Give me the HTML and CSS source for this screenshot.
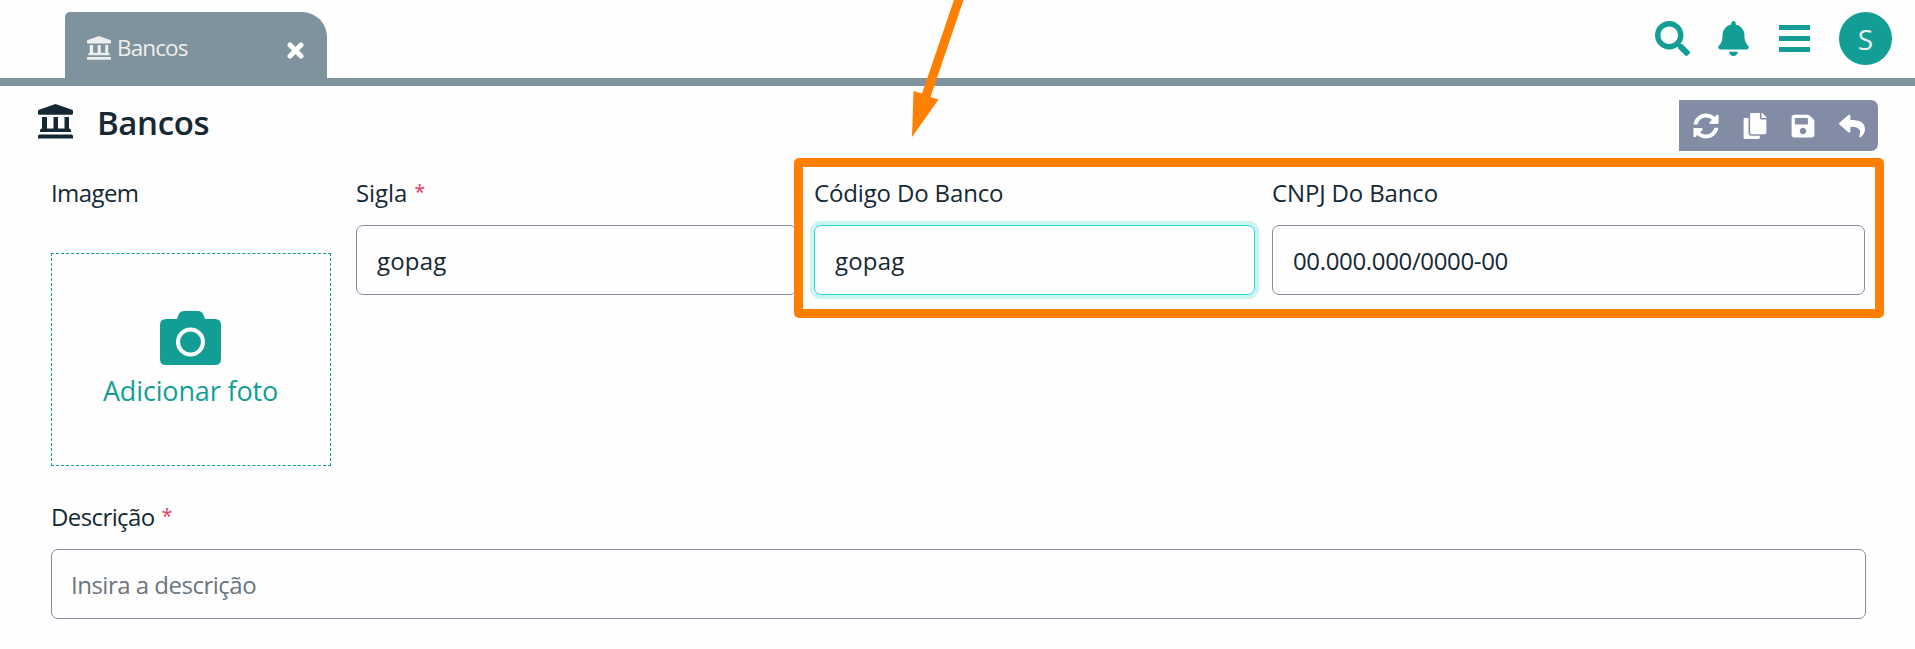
FILE: index.html
```html
<!DOCTYPE html>
<html lang="pt-BR">
<head>
<meta charset="utf-8">
<title>Bancos</title>
<link rel="stylesheet" href="styles.css">
</head>
<body>
<svg class="sprite" aria-hidden="true">
  <symbol id="bank" viewBox="0 0 35 35"><path d="M17.5 0 34 5.800Q35 6.200 35 7V9.500Q35 10.800 33.700 10.800H1.300Q0 10.800 0 9.500V7Q0 6.200 1 5.800ZM4 13H9V24.500H15.500V13H20V24.500H26.500V13H31V24.500Q33 24.500 33 26.500V28H2V26.500Q2 24.500 4 24.500ZM1.500 30.500H33.500Q35 30.500 35 32V34.500H0V32Q0 30.500 1.500 30.500Z"/></symbol>
</svg>
<header class="topbar">
  <div class="tab">
    <svg class="tab-icon"><use href="#bank"/></svg>
    <span class="tab-title">Bancos</span>
    <svg class="tab-close" viewBox="0 0 17 17"><path d="M3 3 14 14M14 3 3 14"/></svg>
  </div>
  <nav class="actions">
    <svg class="search" viewBox="0 0 512 512"><path d="M505 442.700 405.300 343c-4.500-4.500-10.600-7-17-7H372c27.600-35.300 44-79.700 44-128C416 93.100 322.900 0 208 0S0 93.100 0 208s93.100 208 208 208c48.300 0 92.700-16.400 128-44v16.300c0 6.400 2.500 12.500 7 17l99.700 99.700c9.400 9.400 24.600 9.400 33.900 0l28.300-28.300c9.400-9.400 9.400-24.600.1-34zM208 336c-70.700 0-128-57.200-128-128 0-70.700 57.200-128 128-128 70.700 0 128 57.200 128 128 0 70.700-57.200 128-128 128z"/></svg>
    <svg class="bell" viewBox="0 0 448 512"><path d="M224 512c35.320 0 63.970-28.650 63.970-64H160.030c0 35.350 28.650 64 63.970 64zm215.390-149.710c-19.320-20.760-55.470-51.990-55.470-154.290 0-77.700-54.480-139.900-127.940-155.160V32c0-17.670-14.320-32-31.980-32s-31.980 14.330-31.980 32v20.840C118.560 68.100 64.080 130.300 64.080 208c0 102.300-36.150 133.530-55.470 154.290-6 6.450-8.660 14.160-8.610 21.710.11 16.400 12.980 32 32.100 32h383.800c19.120 0 32-15.600 32.100-32 .05-7.550-2.610-15.270-8.610-21.710z"/></svg>
    <svg class="bars" viewBox="0 0 31 27"><path d="M0 0H31V5H0ZM0 11H31V16H0ZM0 22H31V27H0Z"/></svg>
    <span class="avatar">S</span>
  </nav>
</header>
<main>
  <div class="heading">
    <svg class="heading-icon"><use href="#bank"/></svg>
    <h1>Bancos</h1>
    <div class="toolbar">
      <svg viewBox="0 0 512 512"><path d="M370.720 133.280C339.458 104.008 298.888 87.962 255.848 88c-77.458.068-144.328 53.178-162.791 126.850-1.344 5.363-6.122 9.150-11.651 9.150H24.103c-7.498 0-13.194-6.807-11.807-14.176C33.933 94.924 134.813 8 256 8c66.448 0 126.791 26.136 171.315 68.685L463.030 40.970C478.149 25.851 504 36.559 504 57.941V192c0 13.255-10.745 24-24 24H345.941c-21.382 0-32.090-25.851-16.971-40.971l41.750-41.749zM32 296h134.059c21.382 0 32.090 25.851 16.971 40.971l-41.750 41.750c31.262 29.273 71.835 45.319 114.876 45.280 77.418-.070 144.315-53.144 162.787-126.849 1.344-5.363 6.122-9.150 11.651-9.150h57.304c7.498 0 13.194 6.807 11.807 14.176C478.067 417.076 377.187 504 256 504c-66.448 0-126.791-26.136-171.315-68.685L48.970 471.030C33.851 486.149 8 475.441 8 454.059V320c0-13.255 10.745-24 24-24z"/></svg>
      <svg viewBox="0 0 448 512"><path d="M320 448v40c0 13.255-10.745 24-24 24H24c-13.255 0-24-10.745-24-24V120c0-13.255 10.745-24 24-24h72v296c0 30.879 25.121 56 56 56h168zm0-344V0H152c-13.255 0-24 10.745-24 24v368c0 13.255 10.745 24 24 24h272c13.255 0 24-10.745 24-24V128H344c-13.200 0-24-10.800-24-24zm120.971-31.029L375.029 7.029A24 24 0 0 0 358.059 0H352v96h96v-6.059a24 24 0 0 0-7.029-16.970z"/></svg>
      <svg viewBox="0 0 448 512"><path d="M433.941 129.941l-83.882-83.882A48 48 0 0 0 316.118 32H48C21.490 32 0 53.490 0 80v352c0 26.510 21.490 48 48 48h352c26.510 0 48-21.490 48-48V163.882a48 48 0 0 0-14.059-33.941zM224 416c-35.346 0-64-28.654-64-64s28.654-64 64-64 64 28.654 64 64-28.654 64-64 64zm96-304.520V212c0 6.627-5.373 12-12 12H76c-6.627 0-12-5.373-12-12V108c0-6.627 5.373-12 12-12h228.520c3.183 0 6.235 1.264 8.485 3.515l3.480 3.480A11.996 11.996 0 0 1 320 111.480z"/></svg>
      <svg viewBox="0 0 512 512"><path d="M8.309 189.836L184.313 37.851C199.719 24.546 224 35.347 224 56.015v80.053c160.629 1.839 288 34.032 288 186.258 0 61.441-39.581 122.309-83.333 154.132-13.653 9.931-33.111-2.533-28.077-18.631 45.344-145.012-21.507-183.510-176.590-185.742V360c0 20.700-24.300 31.453-39.687 18.164l-176.004-152c-11.071-9.562-11.086-26.753 0-36.328z"/></svg>
    </div>
  </div>
  <form class="fields">
    <div class="field">
      <label class="l-imagem">Imagem</label>
      <div class="photo">
        <svg viewBox="0 0 61 54"><path fill-rule="evenodd" d="M6 8H17L18.500 4Q20 0 24 0H38Q42 0 43.500 4L45 8H55Q61 8 61 14V48Q61 54 55 54H6Q0 54 0 48V14Q0 8 6 8ZM30.500 16.500A14.500 14.500 0 1 0 30.500 45.500A14.500 14.500 0 1 0 30.500 16.500ZM30.500 20.500A10.500 10.500 0 1 1 30.500 41.500A10.500 10.500 0 1 1 30.500 20.500Z"/></svg>
        <span>Adicionar foto</span>
      </div>
    </div>
    <div class="field">
      <label><span class="l-sigla">Sigla</span><b class="req">*</b></label>
      <div class="input"><span class="v-gopag">gopag</span></div>
    </div>
    <div class="field">
      <label class="l-codigo">Código Do Banco</label>
      <div class="input focused"><span class="v-gopag">gopag</span></div>
    </div>
    <div class="field">
      <label class="l-cnpj">CNPJ Do Banco</label>
      <div class="input"><span class="v-cnpj">00.000.000/0000-00</span></div>
    </div>
    <div class="field wide">
      <label><span class="l-desc">Descrição</span><b class="req">*</b></label>
      <div class="input"><span class="placeholder">Insira a descrição</span></div>
    </div>
  </form>
</main>
<div class="highlight"></div>
<svg class="arrow" viewBox="0 0 60 140"><path d="M44 0H53.500L20.500 97 28.500 99.500 2 137 3.500 91 12 93.500Z"/></svg>
</body>
</html>
```
FILE: styles.css
```css
* { box-sizing: border-box; }
body {
  margin: 0;
  height: 649px;
  position: relative;
  overflow: hidden;
  background: #fefefe;
  color: #152935;
  font: 24px/36px "Open Sans", "Noto Sans", sans-serif;
}
svg { display: block; fill: currentColor; flex: none; }
.sprite { position: absolute; width: 0; height: 0; }

.topbar {
  display: flex;
  justify-content: space-between;
  height: 86px;
  padding: 12px 23px 0 65px;
  border-bottom: 8px solid #7e939d;
}
.tab {
  display: flex;
  align-items: flex-start;
  width: 262px;
  height: 66px;
  padding: 0 23px 0 22px;
  border-radius: 5px 25px 0 0;
  background: #7e939d;
  color: #eee;
}
.tab-icon { width: 24px; height: 24px; margin-top: 24px; }
.tab-title { margin: 18px 0 0 6px; font-size: 22.500px; letter-spacing: -.9px; }
.tab-close { width: 17px; height: 17px; margin: 30px 0 0 auto; stroke: #fff; stroke-width: 5; stroke-linecap: round; }
.actions { display: flex; align-items: flex-start; color: #129e94; }
.search { width: 35px; height: 35px; margin-top: 9px; }
.bell { width: 31px; height: 35px; margin: 9px 0 0 28px; }
.bars { width: 31px; height: 27px; margin: 13px 0 0 30px; }
.avatar {
  width: 53px;
  height: 53px;
  margin-left: 29px;
  border-radius: 50%;
  background: #129e94;
  color: #eee;
  font-size: 28px;
  line-height: 54px;
  text-align: center;
}

.heading { display: flex; height: 86px; padding: 14px 37px 0 38px; }
.heading-icon { width: 35px; height: 35px; margin-top: 4px; }
h1 { margin: 0 auto 0 24px; font-size: 33px; line-height: 46px; font-weight: 600; letter-spacing: -.4px; }
.toolbar {
  display: grid;
  grid-template-columns: repeat(4, 26px);
  justify-content: space-between;
  align-items: center;
  width: 199px;
  height: 51px;
  padding: 0 13px 0 14px;
  border-radius: 0 7px 7px 0;
  background: #828da5;
  color: #fff;
}
.toolbar svg { width: 26px; height: 26px; }

.fields {
  display: grid;
  grid-template-columns: 288px 441px 441px 593px;
  column-gap: 17px;
  row-gap: 30px;
  width: 1815px;
  margin-left: 51px;
}
.field { min-width: 0; }
.field label { display: flex; height: 53px; padding-top: 3px; white-space: nowrap; }
.wide { grid-column: 1 / -1; width: 1815px; }
.req { margin-left: 7px; color: #e6395f; font-size: 20px; line-height: 34px; font-weight: 400; }
.input {
  height: 70px;
  padding: 17px 19px;
  border: 1px solid #828da5;
  border-radius: 7px;
  line-height: 35px;
  white-space: nowrap;
}
.focused { border-color: #24dccd; box-shadow: 0 0 0 4px #c8f6f2; }
.placeholder { color: #6c757d; letter-spacing: -.5px; }
.photo {
  display: flex;
  flex-direction: column;
  align-items: center;
  width: 280px;
  height: 213px;
  margin-top: 28px;
  padding: 57px 1px 0 0;
  border: 1px dashed #129e94;
  color: #129e94;
  font-size: 27px;
  letter-spacing: -.15px;
  white-space: nowrap;
}
.photo svg { width: 61px; height: 54px; margin-bottom: 8px; }
.l-imagem { letter-spacing: -.6px; }
.l-sigla { letter-spacing: -.1px; }
.l-codigo { letter-spacing: -.15px; }
.l-cnpj { letter-spacing: -.15px; }
.l-desc { letter-spacing: -.6px; }
.v-gopag { padding-left: 1px; letter-spacing: .2px; }
.v-cnpj { padding-left: 1px; letter-spacing: -.35px; }

.highlight {
  position: absolute;
  left: 794px;
  top: 158px;
  width: 1090px;
  height: 160px;
  border: 9px solid #ff8000;
  border-radius: 5px;
}
.arrow { position: absolute; left: 910px; top: 0; width: 60px; height: 140px; fill: #ff8000; }
```
